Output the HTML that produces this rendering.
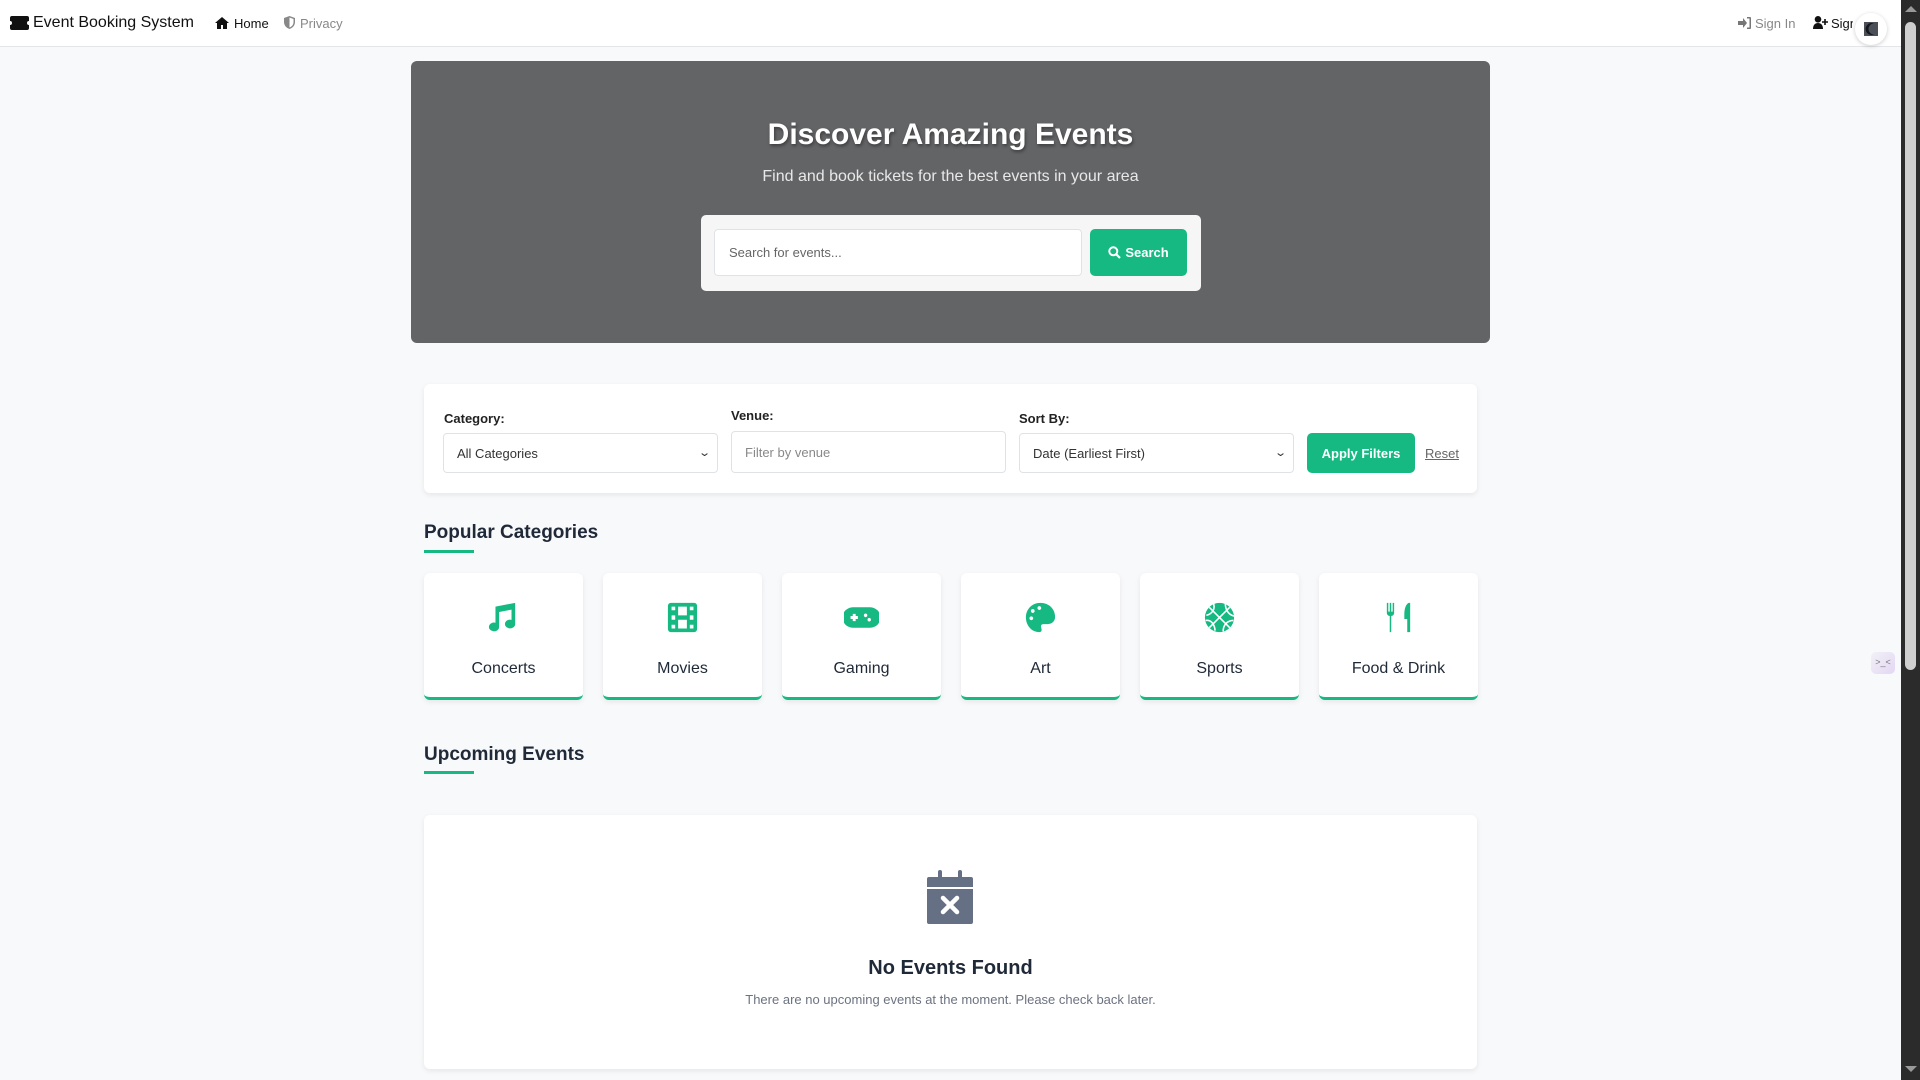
<!DOCTYPE html>
<html><head><meta charset="utf-8"><style>
*{box-sizing:border-box;margin:0;padding:0}
body{width:1920px;height:1080px;overflow:hidden;background:#f8f9fb;font-family:"Liberation Sans",sans-serif;color:#1f2937;position:relative}
.a{position:absolute}
.nav{left:0;top:0;width:1901px;height:47px;background:#fff;border-bottom:1px solid #e3e5e8}
.g{color:#15b981;fill:#15b981}
.card{background:#fff;border-radius:6px;box-shadow:0 2px 6px rgba(0,0,0,.08)}
.lbl{font-size:13px;font-weight:bold;color:#222}
.fld{background:#fff;border:1px solid #dfe3e8;border-radius:4px;font-size:13px;color:#333;padding-left:13px;display:flex;align-items:center}
.cat{top:573px;width:159px;height:127px;background:#fff;border-radius:6px;border-bottom:3px solid #15b981;box-shadow:0 2px 6px rgba(0,0,0,.08)}
.cat svg{position:absolute;left:62px;top:27px;width:35px;height:35px}
.cat span{position:absolute;left:0;right:0;top:87px;text-align:center;font-size:16px;color:#1f2937}
h2{font-size:19px;font-weight:bold;color:#1f2937}
</style></head><body>
<div class="a nav">
 <svg class="a" style="left:10px;top:16px" width="19" height="14" viewBox="0 0 19 14"><path d="M2 0h15a2 2 0 0 1 2 2v3a2 2 0 0 0 0 4v3a2 2 0 0 1-2 2H2a2 2 0 0 1-2-2V9a2 2 0 0 0 0-4V2a2 2 0 0 1 2-2z" fill="#111"/></svg>
 <div class="a" style="left:33px;top:14px;font-size:16px;color:#111">Event Booking System</div>
 <svg class="a" style="left:215px;top:17px" width="14" height="12" viewBox="0 0 14 12"><path d="M7 0L0 6h2v6h4V8h2v4h4V6h2z" fill="#111"/></svg>
 <div class="a" style="left:234px;top:16px;font-size:13px;color:#111">Home</div>
 <svg class="a" style="left:284px;top:16px" width="11" height="13" viewBox="0 0 11 13"><path d="M5.5 0L11 2v4c0 3.5-2.5 6-5.5 7C2.5 12 0 9.5 0 6V2z" fill="#888"/><path d="M5.5 1.5V11.5C8 10.5 9.5 8.5 9.5 6V3z" fill="#fff"/></svg>
 <div class="a" style="left:300px;top:16px;font-size:13px;color:#888">Privacy</div>
 <svg class="a" style="left:1738px;top:17px" width="13" height="12" viewBox="0 0 13 12"><path d="M0 4h5V1l4 5-4 5V8H0z" fill="#777"/><path d="M9 0h3a1 1 0 0 1 1 1v10a1 1 0 0 1-1 1H9v-1.5h2.5v-9H9z" fill="#777"/></svg>
 <div class="a" style="left:1755px;top:16px;font-size:13px;color:#888">Sign In</div>
 <svg class="a" style="left:1813px;top:16px" width="16" height="13" viewBox="0 0 16 13"><circle cx="5" cy="3.3" r="3.3" fill="#111"/><path d="M0 13c0-4 2-6 5-6s5 2 5 6z" fill="#111"/><path d="M12 3v6M9 6h6" stroke="#111" stroke-width="1.6"/></svg>
 <div class="a" style="left:1831px;top:16px;font-size:13px;color:#111;width:22px;overflow:hidden;white-space:nowrap">Sign Up</div>
 <div class="a" style="left:1855px;top:13px;width:32px;height:32px;border-radius:50%;background:#fff;box-shadow:0 1px 4px rgba(0,0,0,.2)"><svg class="a" style="left:9px;top:9px" width="14" height="14" viewBox="0 0 14 14"><rect width="14" height="14" fill="#4a4f58"/><path d="M10 1.5A6 6 0 1 0 10 12.5A5 5 0 0 1 10 1.5z" fill="#15171b"/></svg></div>
</div>
<div class="a" style="left:1901px;top:0;width:19px;height:1080px;background:#2b2b2b"><div class="a" style="left:4px;top:22px;width:11px;height:648px;background:#cfcfcf;border-radius:6px"></div>
<div class="a" style="left:4px;top:6px;width:0;height:0;border:6px solid transparent;border-bottom-color:#999;border-top:0"></div>
<div class="a" style="left:4px;top:1066px;width:0;height:0;border:6px solid transparent;border-top-color:#999;border-bottom:0"></div></div>
<div class="a" style="left:1871px;top:652px;width:24px;height:22px;border-radius:5px;background:linear-gradient(135deg,#f1f1f6,#e4d6f4);font-size:9px;color:#777;text-align:center;line-height:20px">&gt;_&lt;</div>

<div class="a" style="left:411px;top:61px;width:1079px;height:282px;background:#636466;border-radius:6px"></div>
<div class="a" style="left:411px;top:118px;width:1079px;text-align:center;font-size:30px;font-weight:bold;color:#fff;text-shadow:1px 2px 3px rgba(0,0,0,.4)">Discover Amazing Events</div>
<div class="a" style="left:411px;top:168px;width:1079px;text-align:center;font-size:16px;color:#e8e8e8">Find and book tickets for the best events in your area</div>
<div class="a" style="left:701px;top:215px;width:500px;height:76px;background:#f6f6f7;border-radius:5px"></div>
<div class="a fld" style="left:714px;top:229px;width:368px;height:47px;font-size:13px;color:#666;padding-left:14px">Search for events...</div>
<div class="a" style="left:1090px;top:229px;width:97px;height:47px;background:#15b981;border-radius:5px;color:#fff;font-weight:bold;font-size:13px;display:flex;align-items:center;justify-content:center;gap:4px"><svg width="13" height="13" viewBox="0 0 13 13"><circle cx="5.3" cy="5.3" r="4" stroke="#fff" stroke-width="2" fill="none"/><path d="M8.3 8.3L12 12" stroke="#fff" stroke-width="2.2"/></svg>Search</div>

<div class="a card" style="left:424px;top:384px;width:1053px;height:109px"></div>
<div class="a lbl" style="left:444px;top:411px">Category:</div>
<div class="a lbl" style="left:731px;top:408px">Venue:</div>
<div class="a lbl" style="left:1019px;top:411px">Sort By:</div>
<div class="a fld" style="left:443px;top:433px;width:275px;height:40px">All Categories<span class="a" style="right:8px;top:12px;font-size:11px;transform:scaleX(1.4)">&#8964;</span></div>
<div class="a fld" style="left:731px;top:431px;width:275px;height:42px;color:#888">Filter by venue</div>
<div class="a fld" style="left:1019px;top:433px;width:275px;height:40px">Date (Earliest First)<span class="a" style="right:8px;top:12px;font-size:11px;transform:scaleX(1.4)">&#8964;</span></div>
<div class="a" style="left:1307px;top:433px;width:108px;height:40px;background:#15b981;border-radius:5px;color:#fff;font-weight:bold;font-size:13px;display:flex;align-items:center;justify-content:center">Apply Filters</div>
<div class="a" style="left:1425px;top:446px;font-size:13px;color:#666;text-decoration:underline">Reset</div>

<h2 class="a" style="left:424px;top:522px">Popular Categories</h2>
<div class="a" style="left:424px;top:550px;width:50px;height:3px;background:#15b981"></div>

<div class="a cat" style="left:424px"><svg viewBox="0 0 24 24" class="g"><path d="M20 2v14.5a3.5 3 0 1 1-2.5-2.9V6.6L9 8.2v10.3A3.5 3 0 1 1 6.5 15.6V4.5z"/></svg><span>Concerts</span></div>
<div class="a cat" style="left:603px"><svg viewBox="0 0 24 24" class="g"><path fill-rule="evenodd" d="M4 2h16a2 2 0 0 1 2 2v16a2 2 0 0 1-2 2H4a2 2 0 0 1-2-2V4a2 2 0 0 1 2-2zM4.5 4.5v2.5h2.5V4.5zM4.5 10.5v3h2.5v-3zM4.5 17v2.5h2.5V17zM17 4.5v2.5h2.5V4.5zM17 10.5v3h2.5v-3zM17 17v2.5h2.5V17zM9 4.5v6h6v-6zM9 13.5v6h6v-6z"/></svg><span>Movies</span></div>
<div class="a cat" style="left:782px"><svg viewBox="0 0 24 24" class="g"><path fill-rule="evenodd" d="M6 5h12a6 6 0 0 1 0 14H6A6 6 0 0 1 6 5zM6 11h-1.5v2H6v1.5h2V13h1.5v-2H8V9.5H6zM16 10.5a1.2 1.2 0 1 0 0 .01zM18.5 13.5a1.2 1.2 0 1 0 0 .01z"/></svg><span>Gaming</span></div>
<div class="a cat" style="left:961px"><svg viewBox="0 0 24 24" class="g"><path fill-rule="evenodd" d="M12 2C6 2 2 6.5 2 12s4 10 9 10c2 0 2-1.5 1.5-3s0-2.5 1.5-2.5h3c3 0 5-2 5-5C22 6 17.5 2 12 2zM7 12.5a1.3 1.3 0 1 0 0 .01zM8 7.5a1.3 1.3 0 1 0 0 .01zM12.5 5.5a1.3 1.3 0 1 0 0 .01z"/></svg><span>Art</span></div>
<div class="a cat" style="left:1140px"><svg viewBox="0 0 24 24" class="g"><circle cx="12" cy="12" r="10"/><path d="M5 5l14 14M19 5L5 19M8 2.5c1 4 -1 7-5 8M16 2.5c0 5 3 8 6 8.5M21.5 14c-4 0-7 3-7 7.5M2.5 14c3.5-.5 6 2 6.5 7" stroke="#fff" stroke-width="1.1" fill="none"/></svg><span>Sports</span></div>
<div class="a cat" style="left:1319px"><svg viewBox="0 0 24 24" class="g"><path d="M4 2h1v6h1V2h1v6h1V2h1v7a2 2 0 0 1-2 2v11H6V11a2 2 0 0 1-2-2zM19 2c-2 1-3 4-3 8v3h2v9h2V2z"/></svg><span>Food &amp; Drink</span></div>

<h2 class="a" style="left:424px;top:744px">Upcoming Events</h2>
<div class="a" style="left:424px;top:771px;width:50px;height:3px;background:#15b981"></div>

<div class="a card" style="left:424px;top:815px;width:1053px;height:254px"></div>
<svg class="a" style="left:926px;top:870px" width="48" height="54" viewBox="0 0 48 54"><rect x="12" y="0" width="4" height="10" rx="2" fill="#667085"/><rect x="32" y="0" width="4" height="10" rx="2" fill="#667085"/><path d="M3 7h42a2 2 0 0 1 2 2v8H1V9a2 2 0 0 1 2-2zM1 19h46v33a2 2 0 0 1-2 2H3a2 2 0 0 1-2-2z" fill="#667085"/><path d="M17 28l14 14M31 28L17 42" stroke="#fff" stroke-width="4.5" stroke-linecap="round"/></svg>
<div class="a" style="left:424px;top:957px;width:1053px;text-align:center;font-size:20px;font-weight:bold;color:#1f2937">No Events Found</div>
<div class="a" style="left:424px;top:992px;width:1053px;text-align:center;font-size:13px;color:#6b7280">There are no upcoming events at the moment. Please check back later.</div>
</body></html>
